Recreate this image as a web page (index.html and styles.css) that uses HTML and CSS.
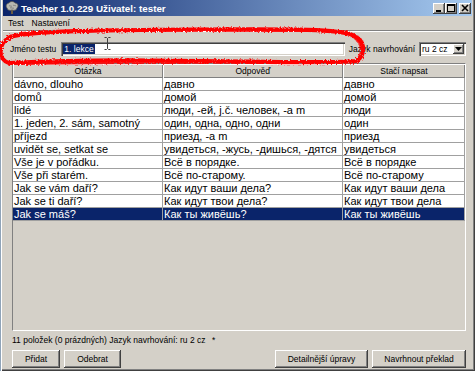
FILE: index.html
```html
<!DOCTYPE html>
<html lang="cs">
<head>
    <meta charset="UTF-8">
    <meta name="viewport" content="width=device-width, initial-scale=1.0">
    <title>Teacher 1.0.229</title>
    <link rel="stylesheet" href="styles.css">
</head>
<body>
<div class="window">
    <div class="titlebar">
        <svg class="app-icon" width="14" height="14" viewBox="0 0 14 14">
            <rect x="6" y="8" width="2" height="5" fill="#6b5a40"/>
            <path d="M2 7 C0 5 2 2 4 2 C5 0 9 0 10 2 C13 2 14 5 12 7 C12 9 9 10 7 9 C5 10 2 9 2 7 Z" fill="#b8b8b0" stroke="#505050" stroke-width="0.8"/>
            <path d="M4 5 C5 4 6 6 7 5 M8 4 C9 5 10 4 11 5 M5 7 C6 6 8 8 9 7" stroke="#707070" stroke-width="0.7" fill="none"/>
        </svg>
        <span class="title">Teacher 1.0.229 Uživatel: tester</span>
        <div class="caption-buttons">
            <span class="cap-btn"><svg width="12" height="11" viewBox="0 0 12 11"><rect x="3" y="7" width="5" height="2" fill="#000"/></svg></span>
            <span class="cap-btn"><svg width="12" height="11" viewBox="0 0 12 11"><rect x="2.5" y="1.5" width="7" height="7" fill="none" stroke="#000"/><rect x="2" y="1" width="8" height="2" fill="#000"/></svg></span>
            <span class="cap-btn close"><svg width="12" height="11" viewBox="0 0 12 11"><path d="M3 2 L9 8 M9 2 L3 8" stroke="#000" stroke-width="1.6"/></svg></span>
        </div>
    </div>

    <div class="menubar">
        <span class="menu-item">Test</span>
        <span class="menu-item">Nastavení</span>
    </div>
    <div class="separator"></div>

    <div class="content">
        <div class="toprow">
            <span class="label">Jméno testu</span>
            <div class="textfield"><span class="selected-text">1. lekce</span></div>
            <span class="label lang-label">Jazyk navrhování</span>
            <div class="combo">
                <span>ru 2 cz</span>
                <span class="combo-arrow"><svg width="7" height="4" viewBox="0 0 7 4"><path d="M0 0 H7 L3.5 4 Z" fill="#000"/></svg></span>
            </div>
        </div>

        <div class="table-pane">
            <table class="grid">
                <colgroup>
                    <col class="col-q">
                    <col class="col-a">
                    <col class="col-s">
                </colgroup>
                <thead>
                    <tr><th>Otázka</th><th>Odpověď</th><th>Stačí napsat</th></tr>
                </thead>
                <tbody>
                    <tr><td>dávno, dlouho</td><td>давно</td><td>давно</td></tr>
                    <tr><td>domů</td><td>домой</td><td>домой</td></tr>
                    <tr><td>lidé</td><td>люди, -ей, j.č. человек, -a m</td><td>люди</td></tr>
                    <tr><td>1. jeden, 2. sám, samotný</td><td>один, одна, одно, одни</td><td>один</td></tr>
                    <tr><td>příjezd</td><td>приезд, -a m</td><td>приезд</td></tr>
                    <tr><td>uvidět se, setkat se</td><td>увидеться, -жусь, -дишься, -дятся</td><td>увидеться</td></tr>
                    <tr><td>Vše je v pořádku.</td><td>Всё в порядке.</td><td>Всё в порядке</td></tr>
                    <tr><td>Vše při starém.</td><td>Всё по-старому.</td><td>Всё по-старому</td></tr>
                    <tr><td>Jak se vám daří?</td><td>Как идут ваши дела?</td><td>Как идут ваши дела</td></tr>
                    <tr><td>Jak se ti daří?</td><td>Как идут твои дела?</td><td>Как идут твои дела</td></tr>
                    <tr class="selected"><td>Jak se máš?</td><td>Как ты живёшь?</td><td>Как ты живёшь</td></tr>
                </tbody>
            </table>
        </div>

        <div class="status">11 položek (0 prázdných) Jazyk navrhování: ru 2 cz <span class="star">*</span></div>

        <div class="button-row">
            <div class="button-group">
                <button class="btn btn-add">Přidat</button>
                <button class="btn btn-remove">Odebrat</button>
            </div>
            <div class="button-group">
                <button class="btn btn-detail">Detailnější úpravy</button>
                <button class="btn btn-suggest">Navrhnout překlad</button>
            </div>
        </div>
    </div>

    <!-- red marker scribble and mouse cursor drawn over the screenshot -->
    <svg class="overlay" width="475" height="371" viewBox="0 0 475 371">
        <defs>
            <filter id="rough" x="-5%" y="-20%" width="110%" height="140%">
                <feTurbulence type="fractalNoise" baseFrequency="0.6" numOctaves="2" seed="3"/>
                <feDisplacementMap in="SourceGraphic" scale="3.5"/>
            </filter>
        </defs>
        <g filter="url(#rough)" fill="none" stroke="#ff0000" stroke-linecap="round">
            <path d="M10 37 C30 31 100 30 200 29.5 C280 29 332 29 350 34 C366 39 367 55 356 61 C330 64 250 61 150 60.5 C80 60 30 62 9 63 C-2 60 -3 44 10 37" stroke-width="4.2"/>
            <path d="M20 33 C90 29 220 31 340 31 M352 36 C364 44 364 56 352 63 M340 62 C250 63 120 62 12 64" stroke-width="2.2" opacity="0.8"/>
        </g>
        <path class="ibeam" d="M104.5 37.5 H106.5 L107.5 38.5 L108.5 37.5 H110.5 M107.5 38.5 V48.5 M104.5 49.5 H106.5 L107.5 48.5 L108.5 49.5 H110.5" fill="none" stroke="#404040" stroke-width="1"/>
    </svg>
</div>
</body>
</html>
```

FILE: styles.css
```css
body {
    margin: 0;
    background: #d4d0c8;
}
.window {
    position: relative;
    width: 475px;
    height: 371px;
    box-sizing: border-box;
    padding: 0 3px 3px 3px;
    background: #d4d0c8;
    display: flex;
    flex-direction: column;
    font-family: "Liberation Sans", Arial, sans-serif;
    font-size: 8.5px;
    color: #000;
    overflow: hidden;
    box-shadow: inset 1px 0 0 #8fa3b8, inset 2px 0 0 #ffffff, inset -1px -1px 0 #404040, inset -2px -2px 0 #808080;
}
.titlebar {
    height: 16px;
    flex: none;
    display: flex;
    align-items: center;
    padding: 0 1px 0 2px;
    background: linear-gradient(to right, #0a246a, #a6caf0);
    color: #fff;
}
.app-icon {
    margin-right: 2px;
    flex: none;
}
.title {
    font-weight: bold;
    font-size: 9.8px;
    white-space: nowrap;
}
.caption-buttons {
    margin-left: auto;
    display: flex;
}
.cap-btn {
    width: 12px;
    height: 11px;
    display: block;
    background: #d4d0c8;
    box-shadow: inset -1px -1px 0 #404040, inset 1px 1px 0 #ffffff, inset -2px -2px 0 #808080;
}
.cap-btn svg {
    display: block;
}
.cap-btn.close {
    margin-left: 2px;
}
.menubar {
    height: 14px;
    flex: none;
    display: flex;
    align-items: center;
    padding-left: 1px;
}
.menu-item {
    padding: 0 4px;
}
.separator {
    height: 0;
    flex: none;
    border-top: 1px solid #808080;
    border-bottom: 1px solid #ffffff;
}
.content {
    flex: 1;
    display: flex;
    flex-direction: column;
    padding: 10px 6px 0 9px;
}
.toprow {
    height: 14px;
    display: flex;
    align-items: center;
    margin-left: -2px;
}
.label {
    white-space: nowrap;
}
.textfield {
    flex: 1;
    height: 14px;
    box-sizing: border-box;
    margin-left: 5px;
    padding: 2px 0 0 2px;
    background: #fff;
    box-shadow: inset 1px 1px 0 #808080, inset 2px 2px 0 #404040, inset -1px -1px 0 #ffffff, inset -2px -2px 0 #d4d0c8;
    line-height: 10px;
}
.selected-text {
    background: #0a246a;
    color: #fff;
    padding: 0 1px;
}
.lang-label {
    margin-left: 4px;
}
.combo {
    width: 47px;
    height: 14px;
    box-sizing: border-box;
    margin-left: 4px;
    padding: 0 2px 0 3px;
    display: flex;
    align-items: center;
    justify-content: space-between;
    background: #fff;
    box-shadow: inset 1px 1px 0 #808080, inset 2px 2px 0 #404040, inset -1px -1px 0 #ffffff, inset -2px -2px 0 #d4d0c8;
}
.combo-arrow {
    width: 11px;
    height: 10px;
    display: flex;
    align-items: center;
    justify-content: center;
    background: #d4d0c8;
    box-shadow: inset -1px -1px 0 #404040, inset 1px 1px 0 #ffffff, inset -2px -2px 0 #808080;
}
.table-pane {
    margin-top: 7px;
    height: 268px;
    box-sizing: border-box;
    border: 1px solid;
    border-color: #808080 #ffffff #ffffff #808080;
    background: #d4d0c8;
    overflow: hidden;
}
.grid {
    table-layout: fixed;
    width: 452px;
    border-collapse: separate;
    border-spacing: 0;
}
.col-q {
    width: 150px;
}
.col-a {
    width: 180px;
}
.col-s {
    width: 122px;
}
.grid th {
    height: 14px;
    padding: 0;
    font-weight: normal;
    font-size: 8.5px;
    line-height: 14px;
    text-align: center;
    background: #d4d0c8;
    box-shadow: inset 1px 1px 0 #ffffff, inset -1px -1px 0 #808080;
}
.grid td {
    padding: 0 0 0 1px;
    font-size: 11px;
    line-height: 12px;
    background: #fff;
    border-right: 1px solid #a0a0a0;
    border-bottom: 1px solid #a0a0a0;
    white-space: nowrap;
    overflow: hidden;
}
.grid tr.selected td {
    background: #0a246a;
    color: #fff;
}
.status {
    margin-top: 3px;
    height: 12px;
    line-height: 12px;
    white-space: nowrap;
}
.star {
    margin-left: 4px;
}
.button-row {
    margin-top: 4px;
    display: flex;
    justify-content: space-between;
}
.button-group {
    display: flex;
    gap: 4px;
}
.btn {
    height: 18px;
    padding: 0;
    border: none;
    background: #d4d0c8;
    font-family: inherit;
    font-size: 8.5px;
    color: #000;
    box-shadow: inset -1px -1px 0 #404040, inset 1px 1px 0 #ffffff, inset -2px -2px 0 #808080;
}
.btn-add {
    width: 48px;
}
.btn-remove {
    width: 57px;
}
.btn-detail {
    width: 93px;
}
.btn-suggest {
    width: 94px;
}
.overlay {
    position: absolute;
    left: 0;
    top: 0;
    pointer-events: none;
}
```
